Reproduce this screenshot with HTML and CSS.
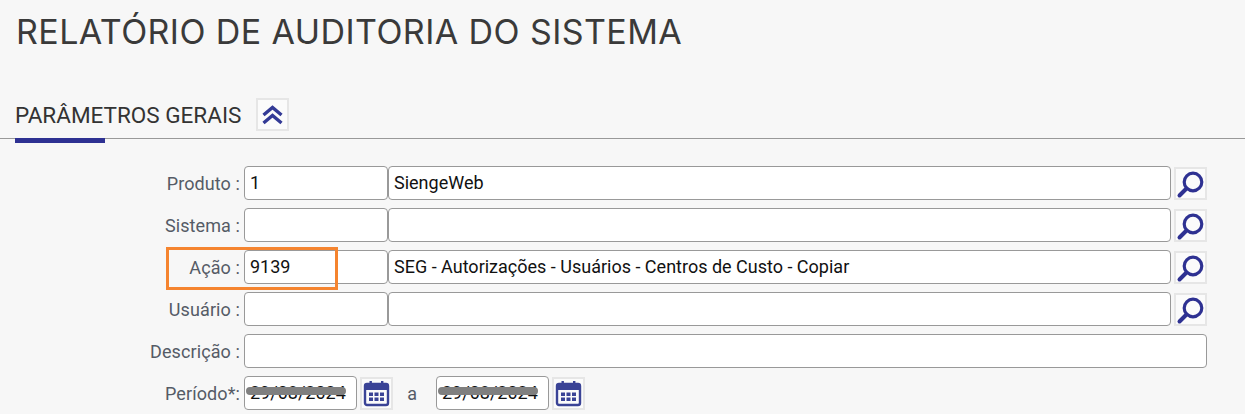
FILE: index.html
```html
<!DOCTYPE html>
<html lang="pt-BR">
<head>
    <meta charset="UTF-8">
    <title>Relatório de Auditoria do Sistema</title>
    <link rel="stylesheet" href="styles.css">
</head>
<body>
    <svg class="icon-defs" width="0" height="0">
        <symbol id="ico-search" viewBox="0 0 33 33">
            <circle cx="19" cy="15" r="8.8" fill="none" stroke="#2e3192" stroke-width="3.2"/>
            <path d="M12.5 21.5 L5.5 28.5" fill="none" stroke="#2e3192" stroke-width="4" stroke-linecap="round"/>
        </symbol>
        <symbol id="ico-cal" viewBox="0 0 32 32">
            <rect x="5" y="7" width="23" height="21" rx="2" fill="none" stroke="#3a4396" stroke-width="2.4"/>
            <rect x="5" y="7" width="23" height="6" fill="#3a4396"/>
            <rect x="9.5" y="4" width="2.4" height="5" fill="#3a4396"/>
            <rect x="21" y="4" width="2.4" height="5" fill="#3a4396"/>
            <path d="M9 15.5h4v3.5h-4zM14.5 15.5h4v3.5h-4zM20 15.5h4v3.5h-4zM9 20.5h4v3.5h-4zM14.5 20.5h4v3.5h-4zM20 20.5h4v3.5h-4z" fill="#3a4396"/>
        </symbol>
    </svg>

    <h1 class="page-title">RELATÓRIO DE AUDITORIA DO SISTEMA</h1>

    <div class="section-head">
        <h2>PARÂMETROS GERAIS</h2>
        <button class="ico-btn" type="button">
            <svg width="33" height="33" viewBox="0 0 33 33"><path d="M7.5 17 L16.5 9.5 L25.5 17 M7.5 25 L16.5 17.5 L25.5 25" fill="none" stroke="#333a96" stroke-width="3.4"/></svg>
        </button>
    </div>

    <form class="params">
        <div class="row">
            <label>Produto :</label>
            <input class="code" type="text" value="1">
            <input class="name" type="text" value="SiengeWeb">
            <button class="ico-btn" type="button"><svg width="33" height="33"><use href="#ico-search"/></svg></button>
        </div>
        <div class="row">
            <label>Sistema :</label>
            <input class="code" type="text">
            <input class="name" type="text">
            <button class="ico-btn" type="button"><svg width="33" height="33"><use href="#ico-search"/></svg></button>
        </div>
        <div class="row">
            <span class="highlight"></span>
            <label>Ação :</label>
            <input class="code" type="text" value="9139">
            <input class="name" type="text" value="SEG - Autorizações - Usuários - Centros de Custo - Copiar">
            <button class="ico-btn" type="button"><svg width="33" height="33"><use href="#ico-search"/></svg></button>
        </div>
        <div class="row">
            <label>Usuário :</label>
            <input class="code" type="text">
            <input class="name" type="text">
            <button class="ico-btn" type="button"><svg width="33" height="33"><use href="#ico-search"/></svg></button>
        </div>
        <div class="row">
            <label>Descrição :</label>
            <input class="full" type="text">
        </div>
        <div class="row">
            <label>Período*:</label>
            <span class="date-wrap">
                <input class="date" type="text" value="29/08/2024">
                <span class="scribble"></span>
            </span>
            <button class="ico-btn cal" type="button"><svg width="32" height="32"><use href="#ico-cal"/></svg></button>
            <span class="date-sep">a</span>
            <span class="date-wrap">
                <input class="date" type="text" value="29/08/2024">
                <span class="scribble"></span>
            </span>
            <button class="ico-btn cal" type="button"><svg width="32" height="32"><use href="#ico-cal"/></svg></button>
        </div>
    </form>
</body>
</html>
```
FILE: styles.css
```css
body {
    margin: 0;
    background: #f7f7f7;
    color: #333;
    font-family: Roboto, "Liberation Sans", sans-serif;
    overflow: hidden;
}
.icon-defs {
    position: absolute;
}
.page-title {
    margin: 0;
    padding: 12px 0 0 16px;
    font-family: Inter, "Open Sans", sans-serif;
    font-size: 34px;
    line-height: 40px;
    font-weight: 400;
    letter-spacing: 0.42px;
    color: #3a3a3a;
    white-space: nowrap;
}
.section-head {
    display: flex;
    align-items: flex-start;
    gap: 15px;
    margin-top: 46px;
    height: 40px;
    padding-left: 15px;
    border-bottom: 1px solid #999;
    position: relative;
}
.section-head::after {
    content: "";
    position: absolute;
    left: 15px;
    top: 40px;
    width: 90px;
    height: 5px;
    background: #2e3192;
}
.section-head h2 {
    margin: 0;
    font-size: 22.5px;
    line-height: 34px;
    font-weight: 400;
    color: #333;
}
.ico-btn {
    display: flex;
    align-items: center;
    justify-content: center;
    box-sizing: border-box;
    flex: none;
    width: 33px;
    height: 33px;
    padding: 0;
    background: #fbfbfb;
    border: 2px solid #e6e6e6;
}
.ico-btn svg {
    flex: none;
}
.params {
    display: flex;
    flex-direction: column;
    gap: 8px;
    margin-top: 27px;
}
.row {
    display: flex;
    align-items: center;
    height: 34px;
    position: relative;
}
.row label {
    width: 240px;
    margin-right: 4px;
    text-align: right;
    font-size: 18px;
    letter-spacing: 0.1px;
    color: #555b66;
}
.row input {
    box-sizing: border-box;
    height: 34px;
    padding: 0 5px 2px;
    background: #fff;
    border: 1px solid #999;
    border-radius: 4px;
    font-family: Roboto, "Liberation Sans", sans-serif;
    font-size: 18px;
    color: #111;
}
.code {
    width: 144px;
}
.name {
    width: 783px;
    margin-right: 3px;
}
.full {
    width: 963px;
}
.date-wrap {
    position: relative;
    display: flex;
}
.row .date {
    width: 112.5px;
}
.cal {
    margin-left: 3px;
}
.date-sep {
    width: 43.5px;
    padding-right: 4px;
    box-sizing: border-box;
    text-align: center;
    font-size: 18px;
    color: #555b66;
}
.scribble {
    position: absolute;
    left: 2px;
    right: 11px;
    top: 11px;
    height: 8px;
    border-radius: 4px;
    background: #7f7f7f;
}
.highlight {
    position: absolute;
    left: 166px;
    top: -3px;
    width: 166px;
    height: 37px;
    border: 3px solid #f5842f;
    pointer-events: none;
}
```
